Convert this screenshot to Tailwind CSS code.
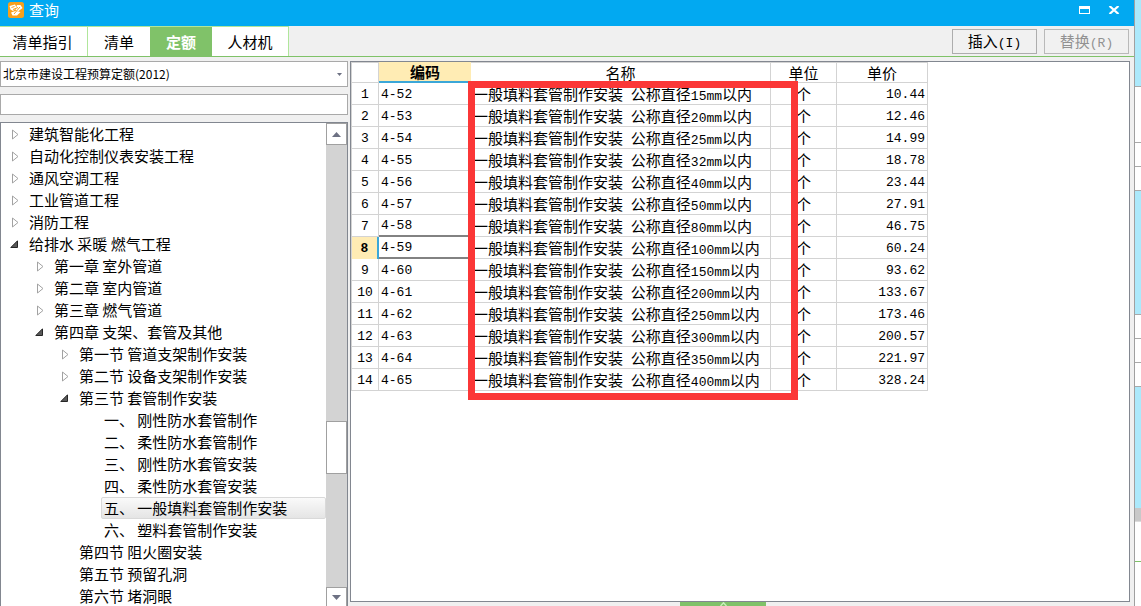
<!DOCTYPE html>
<html lang="zh-CN">
<head>
<meta charset="utf-8">
<title>查询</title>
<script src="https://cdn.jsdelivr.net/npm/@tailwindcss/browser@4"></script>
</head>
<body class="flex h-screen overflow-hidden bg-white font-['Noto_Sans_CJK_SC',sans-serif] text-[15px] leading-[22px] text-black">
<main class="flex min-w-0 flex-1 flex-col bg-[#f0f0f0]">
  <header class="flex h-[26px] shrink-0 items-center bg-[#02a9f1] pr-[14px] pb-[6px] pl-2 text-white">
    <svg class="size-4" viewBox="0 0 16 16" fill="none">
      <rect width="16" height="16" rx="2.5" fill="#f8a01c"/>
      <path d="M1.500 4 7 2.500 8.500 5.500 5 9 2.500 7.500ZM9 3h3.500L14.500 6 10 9.500 7.500 8ZM3 10.500 7.500 9 12.500 10 9 13.500H4.500Z" fill="#fff"/>
      <path d="M3.500 5.500 6.500 4.500M5 7.500 10 5.500M6 12 12 5" stroke="#f8a01c" stroke-width="1"/>
    </svg>
    <h1 class="ml-[5px] flex-1">查询</h1>
    <button aria-label="最大化" class="mr-[18px]"><svg class="h-2 w-[11px]" viewBox="0 0 11 8"><path d="M0 0h11v8H0zM1 3v4h9V3z" fill="#fff" fill-rule="evenodd"/></svg></button>
    <button aria-label="关闭"><svg class="h-2 w-[12px]" viewBox="0 0 12 8"><path d="M1.500 0 10.500 8M10.500 0 1.500 8" stroke="#fff" stroke-width="2.200"/></svg></button>
  </header>

  <div class="flex h-[31px] shrink-0 items-stretch border-b border-[#7fc268]">
    <nav class="flex border-t border-[#b0e69b]">
      <button class="w-[88px] border-r border-[#b0e69b] bg-white pr-[2px]">清单指引</button>
      <button class="w-[62px] bg-white">清单</button>
      <button class="w-[62px] bg-[#80c269] font-bold text-white">定额</button>
      <button class="w-[77px] border-r border-[#b0e69b] bg-white">人材机</button>
    </nav>
    <div class="ml-auto flex gap-[7px] pt-[3px] pr-[5px] pb-[2px]">
      <button class="w-[85px] border border-[#adadad] bg-[#f1f1f1]">插入<span class="font-['Liberation_Mono',monospace] text-[13px]">(I)</span></button>
      <button class="w-[85px] border border-[#b9b9b9] bg-[#f1f1f1] text-[#929292]">替换<span class="font-['Liberation_Mono',monospace] text-[13px]">(R)</span></button>
    </div>
  </div>

  <div class="flex min-h-0 flex-1 gap-[2px] pt-1 pr-1">
    <aside class="flex w-[348px] shrink-0 flex-col gap-[7px]">
      <div class="relative shrink-0">
        <select aria-label="定额库" class="block h-[26px] w-full appearance-none border border-[#a9a9a9] bg-white pl-[2px] text-xs"><option>北京市建设工程预算定额(2012)</option></select>
        <svg class="pointer-events-none absolute top-[12px] right-[6px] h-[3px] w-[5px]" viewBox="0 0 5 3"><path d="M0 0h5L2.500 3z" fill="#6d7183"/></svg>
      </div>
      <input aria-label="搜索" type="text" class="h-[21px] w-full shrink-0 border border-[#a9a9a9] bg-white px-1 text-xs">
      <div class="flex min-h-0 flex-1 border-t border-r border-l border-[#828790] bg-white">
        <ul id="tree" role="tree" class="min-w-0 flex-1 overflow-hidden"></ul>
        <div class="flex w-[21px] flex-col bg-[#d3d3d3]">
          <button aria-label="向上滚动" class="flex h-[22px] shrink-0 items-center justify-center border border-[#a0a0a0] bg-white"><svg class="h-[5px] w-[9px]" viewBox="0 0 9 5"><path d="M0 5h9L4.500 0z" fill="#6d7183"/></svg></button>
          <div class="grow-[276]"></div>
          <div class="h-[53px] shrink-0 border border-[#a0a0a0] bg-white"></div>
          <div class="grow-[113]"></div>
          <button aria-label="向下滚动" class="flex h-[19px] shrink-0 items-center justify-center border border-b-0 border-[#a0a0a0] bg-white"><svg class="h-[5px] w-[9px]" viewBox="0 0 9 5"><path d="M0 0h9L4.500 5z" fill="#6d7183"/></svg></button>
        </div>
      </div>
    </aside>

    <section class="flex min-w-0 flex-1 flex-col">
      <div class="relative min-h-0 flex-1 overflow-hidden border border-[#828790] bg-white">
        <table class="w-[577px] table-fixed border-separate border-spacing-0 border-l border-[#d3d3d3]">
          <colgroup><col class="w-[27px]"><col class="w-[92px]"><col class="w-[300px]"><col class="w-[66px]"><col class="w-[91px]"></colgroup>
          <thead>
            <tr class="h-[21px] leading-[18px]">
              <th class="border-t border-r border-b border-[#d3d3d3] p-0"></th>
              <th class="border-b-2 border-[#3ba7d8] bg-[#ffecb4] p-0 font-bold">编码</th>
              <th class="border-t border-r border-b border-[#d3d3d3] p-0 font-normal">名称</th>
              <th class="border-t border-r border-b border-[#d3d3d3] p-0 font-normal">单位</th>
              <th class="border-t border-r border-b border-[#d3d3d3] p-0 font-normal">单价</th>
            </tr>
          </thead>
          <tbody id="rows"></tbody>
        </table>
        <div class="pointer-events-none absolute top-[19px] left-[117px] h-[319px] w-[330px] border-[7px] border-[#fb3737]"></div>
      </div>
      <div class="h-1 shrink-0">
        <button aria-label="展开" class="ml-[330px] flex h-1 w-[86px] justify-center bg-[#80c269]"><svg class="h-1 w-[7px]" viewBox="0 0 7 4"><path d="M.5 4 3.500.8 6.500 4" fill="none" stroke="#c7efb9" stroke-width="1.500"/></svg></button>
      </div>
    </section>
  </div>
</main>

<div class="flex w-[7px] shrink-0 flex-col border-l border-[#a0a0a0] bg-white">
  <div class="h-[87px] border-b border-[#a9a9a9] bg-[#ace9fb]"></div>
  <div class="h-[56px] border-b border-[#a9a9a9]"></div>
  <div class="h-[24px] border-b border-[#a9a9a9]"></div>
  <div class="h-[24px] border-b border-[#a9a9a9]"></div>
  <div class="h-[124px] border-b border-[#a9a9a9] bg-[#ace9fb]"></div>
  <div class="h-[24px] border-b border-[#a9a9a9]"></div>
  <div class="h-[24px] border-b border-[#a9a9a9]"></div>
  <div class="h-[24px] border-b border-[#a9a9a9]"></div>
  <div class="h-[121px] bg-[#ace9fb]"></div>
  <div class="h-[14px] border-b border-[#dcdcdc] bg-[#c8c8c8]"></div>
  <div class="h-[40px] border-b border-[#7fc268]"></div>
</div>

<script>
const closed = '<button aria-label="展开" class="block w-[20px] shrink-0"><svg class="ml-[3px] h-[11px] w-[7px]" viewBox="0 0 7 11"><path d="M.5 1v9l5.500-4.500z" fill="#fff" stroke="#a2a2a2"/></svg></button>';
const open = '<button aria-label="折叠" class="block w-[20px] shrink-0"><svg class="ml-px size-2" viewBox="0 0 8 8"><path d="M7.500.8v6.700H.8z" fill="#595959" stroke="#262626"/></svg></button>';
const leaf = '<span class="w-[20px] shrink-0"></span>';
const icon = { c: closed, o: open, l: leaf };
const indent = ['pl-[8px]', 'pl-[33px]', 'pl-[58px]', 'pl-[83px]'];
const nodes = [
  [0,'c','建筑智能化工程'],[0,'c','自动化控制仪表安装工程'],[0,'c','通风空调工程'],[0,'c','工业管道工程'],[0,'c','消防工程'],
  [0,'o','给排水 采暖 燃气工程'],[1,'c','第一章 室外管道'],[1,'c','第二章 室内管道'],[1,'c','第三章 燃气管道'],[1,'o','第四章 支架、套管及其他'],
  [2,'c','第一节 管道支架制作安装'],[2,'c','第二节 设备支架制作安装'],[2,'o','第三节 套管制作安装'],
  [3,'l','一、 刚性防水套管制作'],[3,'l','二、 柔性防水套管制作'],[3,'l','三、 刚性防水套管安装'],[3,'l','四、 柔性防水套管安装'],
  [3,'l','五、 一般填料套管制作安装'],[3,'l','六、 塑料套管制作安装'],
  [2,'l','第四节 阻火圈安装'],[2,'l','第五节 预留孔洞'],[2,'l','第六节 堵洞眼']
];
document.getElementById('tree').innerHTML = nodes.map(([d, k, t]) => {
  const label = t.startsWith('五、')
    ? `<span class="-ml-[3px] h-[22px] flex-1 rounded-xs border border-[#d9d9d9] bg-linear-to-b from-[#fafafa] to-[#e5e5e5] pl-[2px] leading-[20px]">${t}</span>`
    : `<span>${t}</span>`;
  return `<li role="treeitem" class="flex h-[22px] items-center whitespace-nowrap ${indent[d]}">${icon[k]}${label}</li>`;
}).join('');

const data = [[15,'10.44'],[20,'12.46'],[25,'14.99'],[32,'18.78'],[40,'23.44'],[50,'27.91'],[80,'46.75'],[100,'60.24'],[150,'93.62'],[200,'133.67'],[250,'173.46'],[300,'200.57'],[350,'221.97'],[400,'328.24']];
document.getElementById('rows').innerHTML = data.map(([mm, price], i) => {
  const num = i === 7
    ? '<th class="border-r-2 border-[#3ba7d8] bg-[#ffecb4] p-0 pt-[2px] font-[\'Liberation_Mono\',monospace] text-[13px] font-bold">8</th>'
    : `<th class="border-r border-b border-[#d3d3d3] p-0 pt-[2px] font-['Liberation_Mono',monospace] text-[13px] font-normal">${i + 1}</th>`;
  const edge = i === 6 || i === 7 ? 'border-b-2 border-b-[#828282]' : 'border-b border-b-[#d3d3d3]';
  return `<tr class="h-[22px] leading-[18px] whitespace-nowrap">${num}
    <td class="border-r border-r-[#d3d3d3] ${edge} p-0 pt-[2px] pl-[2px] font-['Liberation_Mono',monospace] text-[13px]">4-${52 + i}</td>
    <td class="border-r border-b border-[#d3d3d3] p-0 pl-[2px]">一般填料套管制作安装<span class="font-['Liberation_Mono',monospace] text-[13px] leading-none"> </span>公称直径<span class="font-['Liberation_Mono',monospace] text-[13px] leading-none">${mm}mm</span>以内</td>
    <td class="border-r border-b border-[#d3d3d3] p-0 pl-[25px]">个</td>
    <td class="border-r border-b border-[#d3d3d3] p-0 pt-[2px] pr-[2px] text-right font-['Liberation_Mono',monospace] text-[13px]">${price}</td></tr>`;
}).join('');
</script>
</body>
</html>
